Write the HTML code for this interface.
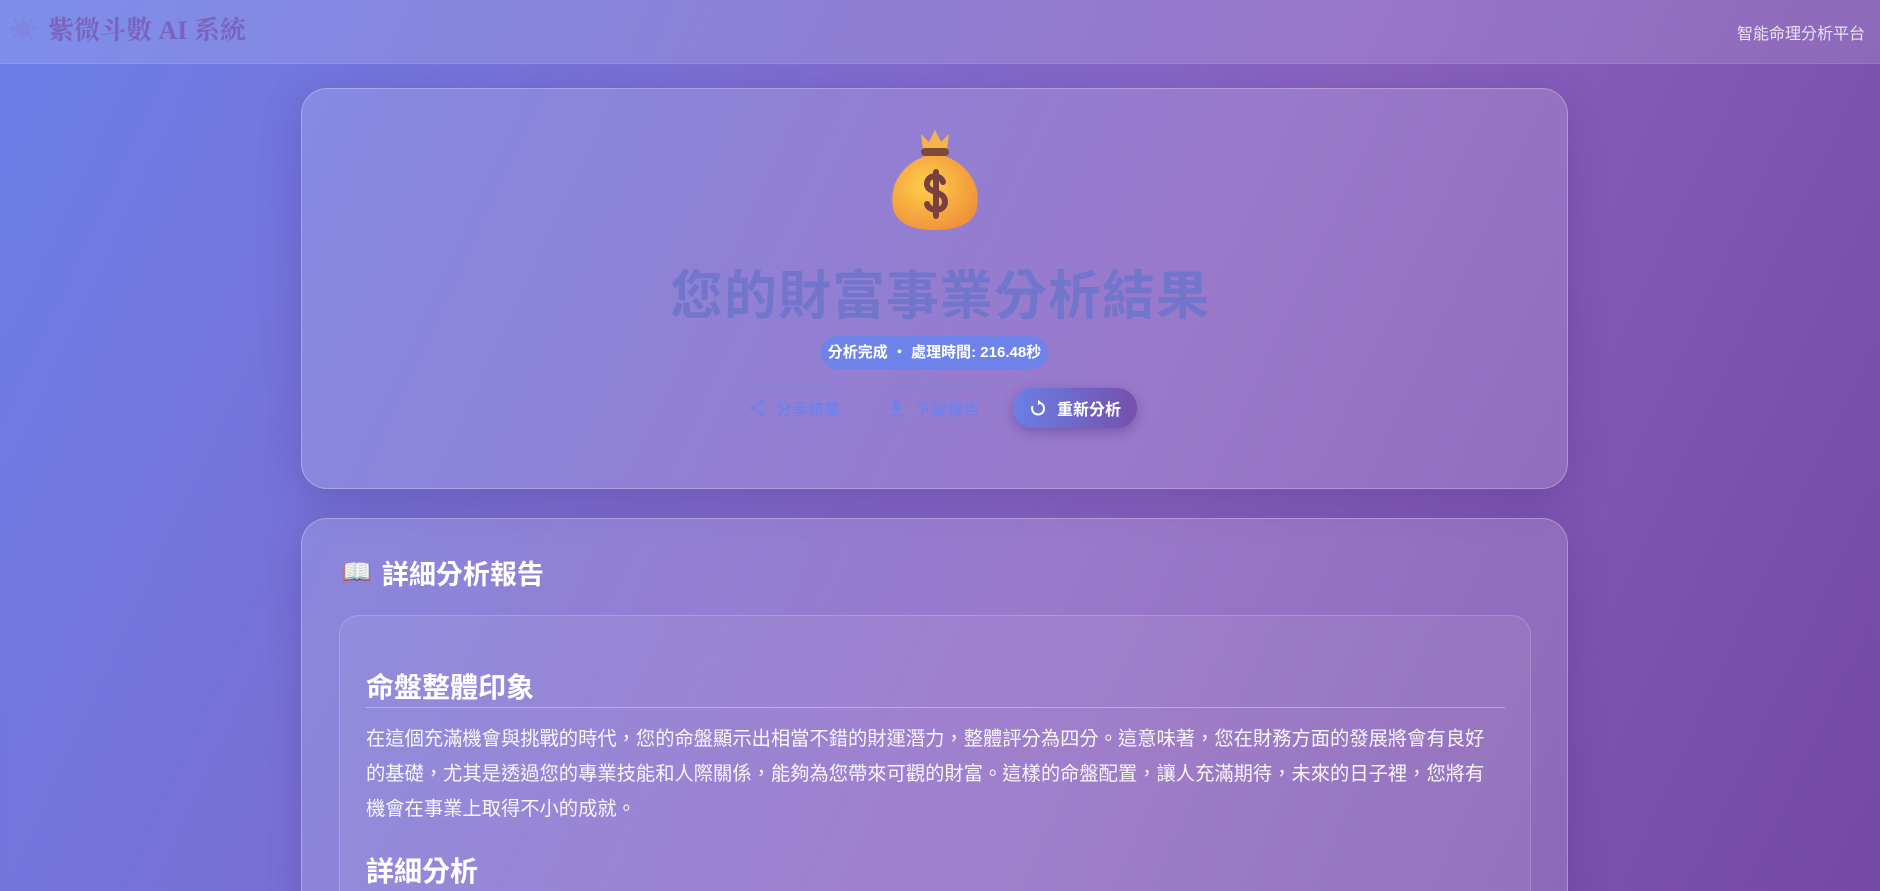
<!DOCTYPE html>
<html><head><meta charset="utf-8"><style>
*{margin:0;padding:0;box-sizing:border-box}
html,body{width:1880px;height:891px;overflow:hidden}
body{background:linear-gradient(115deg,#6a7ee8 0%,#8a62c0 60%,#7448a4 100%);font-family:"Liberation Sans","Noto Sans CJK TC",sans-serif;color:#fff;position:relative}
.hdr{position:absolute;left:0;top:0;width:1880px;height:64px;background:rgba(255,255,255,0.13);border-bottom:1px solid rgba(255,255,255,0.1)}
.logo{position:absolute;left:10px;top:10px;font-family:"Liberation Serif","Noto Serif CJK SC",serif;font-weight:bold;font-size:26px;color:#7a5cb8;opacity:.85;display:flex;align-items:center;gap:12px}
.rt{position:absolute;right:15px;top:20px;font-size:16px;color:rgba(255,255,255,0.8)}
.card{position:absolute;left:301px;width:1267px;background:rgba(255,255,255,0.14);border:1px solid rgba(255,255,255,0.28);border-radius:26px;box-shadow:0 10px 40px rgba(60,30,120,0.25)}
.c1{top:88px;height:401px}
.c2{top:518px;height:420px}
.title{position:absolute;left:0;width:100%;top:254px;text-align:center;font-size:53px;font-weight:bold;color:#7176cc;letter-spacing:1px}
.pill{position:absolute;left:821px;top:336px;width:227px;height:33px;border-radius:17px;background:#6d83ea;font-size:15px;font-weight:bold;text-align:center;line-height:33px}
.btn{position:absolute;top:388px;height:40px;border-radius:20px;font-size:16px;font-weight:bold;display:flex;align-items:center;justify-content:center;gap:10px}
.b1{left:734px;width:120px;border:1px solid rgba(110,135,240,0.4);color:rgba(105,130,240,0.8)}
.b2{left:874px;width:120px;border:1px solid rgba(110,135,240,0.4);color:rgba(105,130,240,0.8)}
.b3{left:1013px;width:124px;background:linear-gradient(90deg,#6a7fe6,#7550ac);color:#fff;box-shadow:0 4px 12px rgba(60,30,120,0.35)}
.h2{position:absolute;left:342px;top:553px;font-size:27px;font-weight:bold;display:flex;align-items:center;gap:10px}
.inner{position:absolute;left:339px;top:615px;width:1192px;height:300px;border-radius:20px;background:rgba(255,255,255,0.06);border:1px solid rgba(255,255,255,0.18)}
.h3{position:absolute;left:366px;top:666px;font-size:28px;font-weight:bold}
.hr{position:absolute;left:366px;top:707px;width:1139px;height:1px;background:rgba(255,255,255,0.35)}
.p{position:absolute;left:366px;top:722px;width:1126px;font-size:19.3px;line-height:35px;color:rgba(255,255,255,0.93)}
.h4{position:absolute;left:366px;top:850px;font-size:28px;font-weight:bold}
</style></head><body>
<div class="hdr">
<div class="logo"><svg width="26" height="26" viewBox="0 0 26 26"><circle cx="13" cy="13" r="8" fill="#7d86e0"/><g fill="#7d86e0"><circle cx="13" cy="2" r="2"/><circle cx="13" cy="24" r="2"/><circle cx="2" cy="13" r="2"/><circle cx="24" cy="13" r="2"/><circle cx="5" cy="5" r="2"/><circle cx="21" cy="5" r="2"/><circle cx="5" cy="21" r="2"/><circle cx="21" cy="21" r="2"/></g></svg><span>紫微斗數 AI 系統</span></div>
<div class="rt">智能命理分析平台</div>
</div>
<div class="card c1"></div>
<svg style="position:absolute;left:887px;top:126px" width="96" height="108" viewBox="0 0 96 108">
<defs><radialGradient id="g" cx="40%" cy="40%" r="65%"><stop offset="0" stop-color="#ffcf4a"/><stop offset="1" stop-color="#f0923a"/></radialGradient></defs>
<path d="M34 8 L42 16 L48 4 L54 16 L62 8 L60 24 L36 24 Z" fill="#f7b34a"/>
<rect x="34" y="22" width="28" height="8" rx="4" fill="#7a4a3a"/>
<path d="M38 30 C12 40 2 62 6 82 C10 100 30 104 48 104 C66 104 86 100 90 82 C94 62 84 40 58 30 Z" fill="url(#g)"/>
<path d="M56 56 C54 48 40 48 40 58 C40 68 58 64 58 76 C58 86 42 86 40 78 M49 46 L49 90" stroke="#7a4040" stroke-width="6" fill="none" stroke-linecap="round"/>
</svg>
<div class="title">您的財富事業分析結果</div>
<div class="pill">分析完成 ・ 處理時間: 216.48秒</div>
<div class="btn b1"><svg width="18" height="18" viewBox="0 0 18 18" fill="currentColor"><circle cx="14" cy="3.5" r="2.5"/><circle cx="4" cy="9" r="2.5"/><circle cx="14" cy="14.5" r="2.5"/><path d="M4 9L14 3.5M4 9L14 14.5" stroke="currentColor" stroke-width="1.6"/></svg>分享結果</div>
<div class="btn b2"><svg width="16" height="18" viewBox="0 0 16 18" fill="currentColor"><path d="M5 1h6v6h4l-7 7-7-7h4z"/><rect x="1" y="15.5" width="14" height="2"/></svg>下載報告</div>
<div class="btn b3"><svg width="18" height="18" viewBox="0 0 18 18"><path d="M9 3.5A6 6 0 1 1 3.6 7" stroke="#fff" stroke-width="2" fill="none"/><path d="M9 0.5v6l3-3z" fill="#fff"/></svg>重新分析</div>
<div class="card c2"></div>
<div class="h2"><span style="font-size:24px">📖</span>詳細分析報告</div>
<div class="inner"></div>
<div class="h3">命盤整體印象</div>
<div class="hr"></div>
<div class="p">在這個充滿機會與挑戰的時代，您的命盤顯示出相當不錯的財運潛力，整體評分為四分。這意味著，您在財務方面的發展將會有良好的基礎，尤其是透過您的專業技能和人際關係，能夠為您帶來可觀的財富。這樣的命盤配置，讓人充滿期待，未來的日子裡，您將有機會在事業上取得不小的成就。</div>
<div class="h4">詳細分析</div>
</body></html>
